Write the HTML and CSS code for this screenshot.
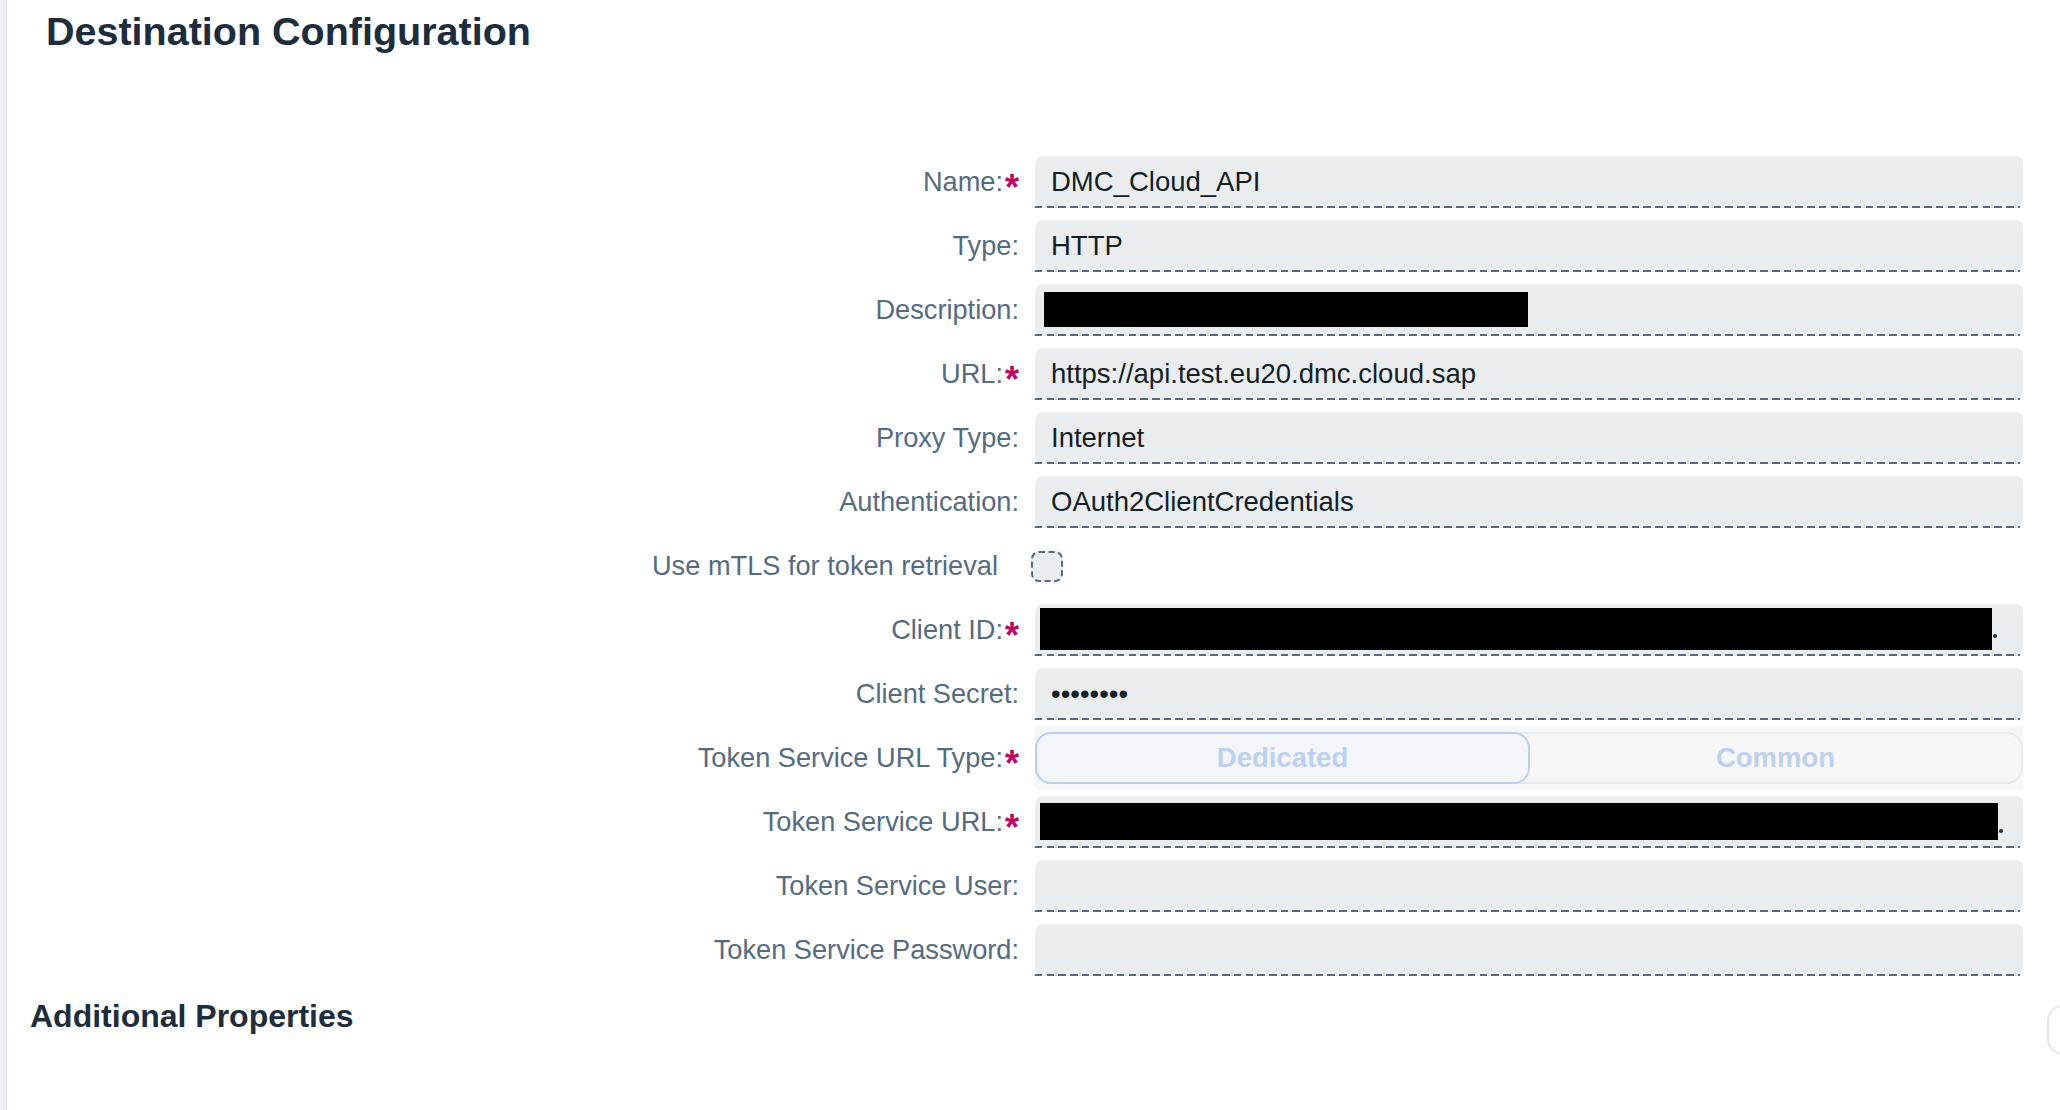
FILE: index.html
```html
<!DOCTYPE html>
<html lang="en">
<head>
<meta charset="utf-8">
<title>Destination Configuration</title>
<link rel="stylesheet" href="styles.css">
</head>
<body>
<div class="page">
  <div class="edge"></div>
  <main class="content">
    <h1 class="title">Destination Configuration</h1>
    <div class="form">
      <div class="row">
        <label class="lbl">Name:<span class="req">*</span></label>
        <div class="inp"><span class="val">DMC_Cloud_API</span></div>
      </div>
      <div class="row">
        <label class="lbl">Type:</label>
        <div class="inp"><span class="val">HTTP</span></div>
      </div>
      <div class="row">
        <label class="lbl">Description:</label>
        <div class="inp"><span class="redact redact-desc"></span></div>
      </div>
      <div class="row">
        <label class="lbl">URL:<span class="req">*</span></label>
        <div class="inp"><span class="val">https://api.test.eu20.dmc.cloud.sap</span></div>
      </div>
      <div class="row">
        <label class="lbl">Proxy Type:</label>
        <div class="inp"><span class="val">Internet</span></div>
      </div>
      <div class="row">
        <label class="lbl">Authentication:</label>
        <div class="inp"><span class="val">OAuth2ClientCredentials</span></div>
      </div>
      <div class="row">
        <label class="lbl lbl-check">Use mTLS for token retrieval</label>
        <div class="check-cell"><span class="checkbox"></span></div>
      </div>
      <div class="row">
        <label class="lbl">Client ID:<span class="req">*</span></label>
        <div class="inp"><span class="redact redact-id"></span><span class="speck speck-id"></span></div>
      </div>
      <div class="row">
        <label class="lbl">Client Secret:</label>
        <div class="inp"><span class="val dots">••••••••</span></div>
      </div>
      <div class="row">
        <label class="lbl">Token Service URL Type:<span class="req">*</span></label>
        <div class="seg-band">
          <div class="seg">
            <span class="seg-item seg-sel">Dedicated</span>
            <span class="seg-item">Common</span>
          </div>
        </div>
      </div>
      <div class="row">
        <label class="lbl">Token Service URL:<span class="req">*</span></label>
        <div class="inp"><span class="redact redact-url"></span><span class="speck speck-url"></span></div>
      </div>
      <div class="row">
        <label class="lbl">Token Service User:</label>
        <div class="inp"></div>
      </div>
      <div class="row">
        <label class="lbl">Token Service Password:</label>
        <div class="inp"></div>
      </div>
    </div>
    <div class="toolbar">
      <h2 class="subtitle">Additional Properties</h2>
      <span class="tb-btn"></span>
    </div>
  </main>
</div>
</body>
</html>
```

FILE: styles.css
```css
html, body {
  margin: 0;
  padding: 0;
  background: #ffffff;
  overflow: hidden;
}

body {
  font-family: "Liberation Sans", Arial, sans-serif;
  width: 2060px;
  height: 1110px;
}

.page {
  display: flex;
  height: 1110px;
}

.edge {
  width: 7px;
  flex-shrink: 0;
  background: linear-gradient(to right, #f3f4f6, #e6e8eb);
}

.content {
  flex: 1;
  min-width: 0;
}

.title {
  margin: 0;
  padding: 11px 0 0 39px;
  font-size: 39.5px;
  line-height: 40px;
  font-weight: bold;
  color: #1d2d3e;
}

.form {
  margin-top: 105px;
  display: flex;
  flex-direction: column;
  gap: 12px;
}

.row {
  display: grid;
  grid-template-columns: 1012px 988px;
  column-gap: 16px;
  height: 52px;
}

.lbl {
  display: flex;
  justify-content: flex-end;
  align-items: center;
  font-size: 27.2px;
  color: #556b82;
  white-space: nowrap;
}

.lbl-check {
  padding-right: 21px;
}

.req {
  color: #ba066c;
  font-weight: bold;
  font-size: 36px;
  margin-left: 2px;
  align-self: flex-start;
  line-height: 1;
  margin-top: 14px;
}

.inp {
  position: relative;
  height: 52px;
  box-sizing: border-box;
  background: #eaecee;
  border-radius: 8px;
  display: flex;
  align-items: center;
}

.inp::after {
  content: "";
  position: absolute;
  left: 0;
  right: 3px;
  bottom: 0;
  height: 2px;
  background: repeating-linear-gradient(to right, #556b82 0 7.5px, transparent 7.5px 11.7px);
}

.val {
  padding-left: 16px;
  font-size: 27.5px;
  color: #131e29;
  white-space: nowrap;
}

.dots {
  font-size: 27.5px;
  letter-spacing: 0;
}

.redact {
  display: block;
  background: #000000;
}

.redact-desc {
  width: 484px;
  height: 35px;
  margin-left: 9px;
  margin-bottom: 1px;
}

.redact-id {
  width: 952px;
  height: 42px;
  margin-left: 5px;
  margin-bottom: 2px;
}

.redact-url {
  width: 958px;
  height: 37px;
  margin-left: 5px;
  margin-bottom: 2px;
}

.speck {
  display: block;
  width: 4px;
  height: 4px;
  background: #1d2d3e;
  border-radius: 50%;
  margin-left: 1px;
  align-self: flex-end;
}

.speck-id {
  margin-bottom: 18px;
}

.speck-url {
  margin-bottom: 15px;
}

.check-cell {
  display: flex;
  align-items: center;
}

.checkbox {
  display: block;
  width: 32px;
  height: 31px;
  box-sizing: border-box;
  margin-left: -4px;
  border: 2px dashed #556b82;
  border-radius: 8px;
  background: #eaecee;
}

.seg-band {
  margin: -6px 0 -6px;
  padding: 6px 0;
  background: #f5f6f7;
}

.seg {
  display: flex;
  height: 52px;
  box-sizing: border-box;
  border: 2px solid #e6e8eb;
  border-radius: 16px;
  background: #f7f7f8;
}

.seg-item {
  flex: 1;
  display: flex;
  align-items: center;
  justify-content: center;
  font-size: 27.5px;
  font-weight: bold;
  color: #bcd1f1;
  box-sizing: border-box;
}

.seg-sel {
  margin: -2px 0 -2px -2px;
  border: 2px solid #b8cff2;
  border-radius: 16px;
  background: #f3f5f9;
}

.toolbar {
  display: flex;
  align-items: flex-start;
  margin-top: 24px;
  padding-left: 23px;
}

.subtitle {
  margin: 0;
  font-size: 32px;
  line-height: 32px;
  font-weight: bold;
  color: #1d2d3e;
}

.tb-btn {
  display: block;
  flex-shrink: 0;
  width: 60px;
  height: 50px;
  box-sizing: border-box;
  margin-top: 5px;
  margin-left: auto;
  margin-right: -47px;
  border: 2px solid #e5e6e8;
  border-radius: 16px;
  background: #ffffff;
}
```
